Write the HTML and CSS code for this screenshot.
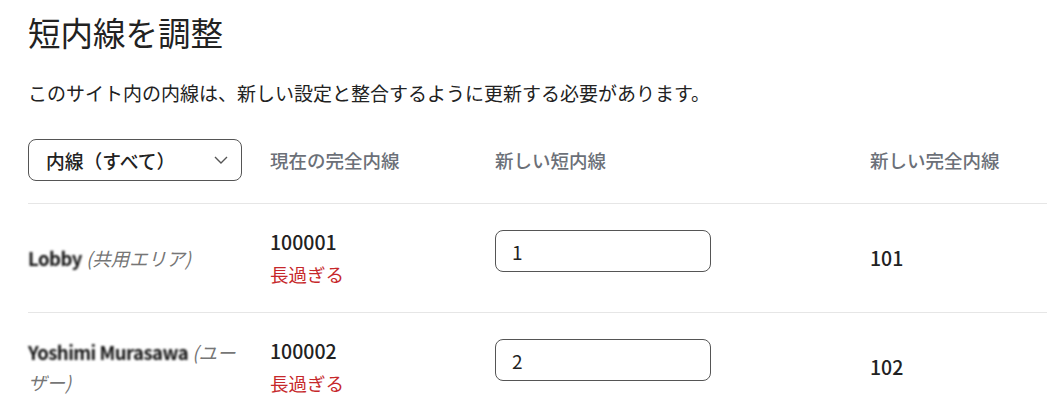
FILE: index.html
```html
<!DOCTYPE html>
<html lang="ja">
<head>
<meta charset="utf-8">
<link rel="stylesheet" href="styles.css">
</head>
<body>
<main class="page">
  <h1 class="title">短内線を調整</h1>
  <p class="desc">このサイト内の内線は、新しい設定と整合するように更新する必要があります。</p>
  <div class="table">
    <div class="row head">
      <div class="cell">
        <div class="select">
          <span>内線（すべて）</span>
          <svg class="chev" width="14" height="8" viewBox="0 0 14 8"><path d="M1 1l6 6 6-6" fill="none" stroke="#555" stroke-width="1.4"/></svg>
        </div>
      </div>
      <div class="cell th">現在の完全内線</div>
      <div class="cell th">新しい短内線</div>
      <div class="cell th">新しい完全内線</div>
    </div>
    <div class="row">
      <div class="cell name"><span class="blur">Lobby</span> <i class="type">(共用エリア)</i></div>
      <div class="cell cur"><div class="num">100001</div><div class="err">長過ぎる</div></div>
      <div class="cell"><div class="field"><div class="input">1</div></div></div>
      <div class="cell num">101</div>
    </div>
    <div class="row">
      <div class="cell name"><span class="blur">Yoshimi Murasawa</span> <i class="type">(ユーザー)</i></div>
      <div class="cell cur"><div class="num">100002</div><div class="err">長過ぎる</div></div>
      <div class="cell"><div class="field"><div class="input">2</div></div></div>
      <div class="cell num">102</div>
    </div>
  </div>
</main>
</body>
</html>
```

FILE: styles.css
```css
* { box-sizing: border-box; }
html, body { margin: 0; background: #fff; }
body {
  font-family: "Noto Sans CJK JP", "Noto Sans", sans-serif;
  color: #222;
  overflow: hidden;
}
.page { padding: 10px 0 0 28px; }
.title {
  margin: 0;
  font-size: 32.5px;
  font-weight: 400;
  line-height: 44px;
  color: #222;
}
.desc {
  margin: 25px 0 0;
  font-size: 19px;
  line-height: 28px;
  color: #222;
}
.table { margin-top: 15px; }
.row {
  display: grid;
  grid-template-columns: 242px 225px 375px 1fr;
  align-items: center;
  border-bottom: 1px solid #e6e6e6;
  padding: 23px 0;
}
.row.head { padding: 17px 0 22px; }
.th {
  font-size: 18.5px;
  font-weight: 500;
  color: #6b7078;
}
.select {
  width: 214px;
  height: 42px;
  border: 1px solid #555;
  border-radius: 8px;
  display: flex;
  align-items: center;
  justify-content: space-between;
  padding: 0 13px 0 17px;
  font-size: 18.8px;
  font-weight: 500;
  color: #222;
}
.chev { display: block; }
.name {
  font-size: 18.5px;
  line-height: 30px;
  padding-right: 24px;
}
.blur {
  color: #111;
  font-weight: 700;
  letter-spacing: -0.5px;
  filter: blur(1.1px);
}
.type { color: #767676; font-style: italic; }
.cur { display: flex; flex-direction: column; gap: 2px; }
.num {
  font-size: 19.5px;
  font-weight: 500;
  line-height: 30px;
  color: #222;
}
.err {
  font-size: 18.5px;
  line-height: 30px;
  color: #c6282b;
}
.field { padding-bottom: 14px; }
.input {
  width: 216px;
  height: 42px;
  border: 1px solid #555;
  border-radius: 8px;
  padding: 0 16px;
  display: flex;
  align-items: center;
  font-size: 19px;
  color: #222;
}
```
